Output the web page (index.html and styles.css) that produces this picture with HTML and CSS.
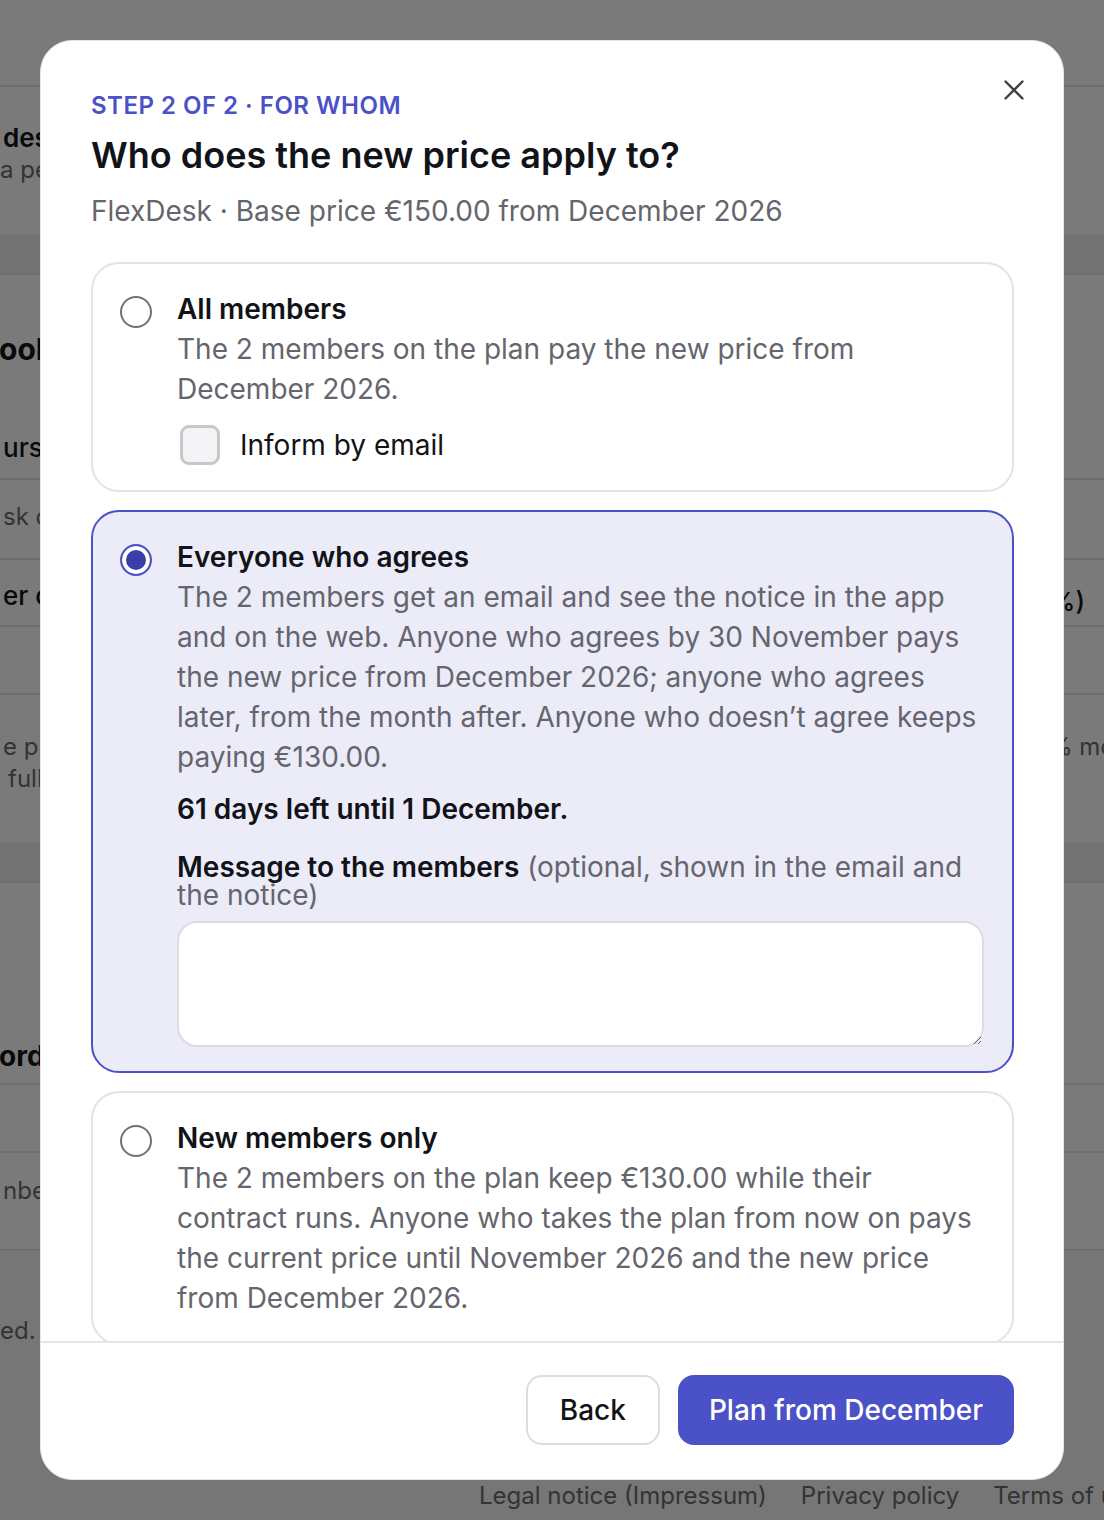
FILE: index.html
```html
<!DOCTYPE html>
<html lang="en">
<head>
<meta charset="utf-8">
<title>Who does the new price apply to?</title>
<link rel="stylesheet" href="styles.css">
</head>
<body>
<div class="page">
  <div class="page-main">
    <div class="bg-row bg-head"></div>
    <div class="bg-row bg-r1">
      <div class="bg-left">
        <div class="bg-strong">desk</div>
        <div class="bg-muted bg-pl0">a per month</div>
      </div>
    </div>
    <div class="bg-band"></div>
    <div class="bg-row bg-r2">
      <div class="bg-left">
        <div class="bg-h2">ook</div>
        <div class="bg-medium bg-hours">urs</div>
      </div>
    </div>
    <div class="bg-row bg-r3">
      <div class="bg-left"><div class="bg-muted">sk c</div></div>
    </div>
    <div class="bg-row bg-r4">
      <div class="bg-left"><div class="bg-medium">er c</div></div>
      <div class="bg-right bg-right-end"><span class="bg-medium">(−13%)</span></div>
    </div>
    <div class="bg-row bg-r5"></div>
    <div class="bg-row bg-r6">
      <div class="bg-left">
        <div class="bg-muted">e pr</div>
        <div class="bg-muted bg-pl8">full</div>
      </div>
      <div class="bg-right bg-right-start"><span class="bg-muted">10% more</span></div>
    </div>
    <div class="bg-band"></div>
    <div class="bg-row bg-r7">
      <div class="bg-left"><div class="bg-h3">orde</div></div>
    </div>
    <div class="bg-row bg-r8"></div>
    <div class="bg-row bg-r9">
      <div class="bg-left"><div class="bg-muted">nber</div></div>
    </div>
  </div>
  <footer class="page-footer">
    <div class="bg-muted bg-ended">ed.</div>
    <nav class="footer-links">
      <span>Legal notice (Impressum)</span>
      <span>Privacy policy</span>
      <span>Terms of use</span>
    </nav>
  </footer>
</div>

<div class="overlay">
  <div class="modal" role="dialog" aria-modal="true">
    <button class="close" aria-label="Close">
      <svg viewBox="0 0 20 20" width="20" height="20"><path d="M1.5 1.5 L18.5 18.5 M18.5 1.5 L1.5 18.5" fill="none" stroke="#3f3f46" stroke-width="2.4" stroke-linecap="round"/></svg>
    </button>
    <div class="modal-body">
      <div class="eyebrow">STEP 2 OF 2 · FOR WHOM</div>
      <h1 class="title">Who does the new price apply to?</h1>
      <p class="subtitle">FlexDesk · Base price €150.00 from December 2026</p>

      <div class="options">
        <label class="option">
          <span class="radio"></span>
          <span class="option-content">
            <span class="option-title">All members</span>
            <span class="option-desc">The 2 members on the plan pay the new price from December 2026.</span>
            <span class="check-row">
              <span class="checkbox"></span>
              <span class="check-label">Inform by email</span>
            </span>
          </span>
        </label>

        <div class="option option-selected">
          <span class="radio radio-on"></span>
          <div class="option-content">
            <span class="option-title">Everyone who agrees</span>
            <span class="option-desc">The 2 members get an email and see the notice in the app and on the web. Anyone who agrees by 30 November pays the new price from December 2026; anyone who agrees later, from the month after. Anyone who doesn’t agree keeps paying €130.00.</span>
            <span class="deadline">61 days left until 1 December.</span>
            <span class="msg-label"><strong>Message to the members</strong> (optional, shown in the email and the notice)</span>
            <textarea class="msg-input"></textarea>
          </div>
        </div>

        <label class="option">
          <span class="radio"></span>
          <span class="option-content">
            <span class="option-title">New members only</span>
            <span class="option-desc">The 2 members on the plan keep €130.00 while their contract runs. Anyone who takes the plan from now on pays the current price until November 2026 and the new price from December 2026.</span>
          </span>
        </label>
      </div>
    </div>
    <div class="modal-footer">
      <button class="btn btn-secondary">Back</button>
      <button class="btn btn-primary">Plan from December</button>
    </div>
  </div>
</div>
</body>
</html>
```

FILE: styles.css
```css
* { box-sizing: border-box; }
html, body { margin: 0; padding: 0; }
body {
  font-family: Inter, "Noto Sans", "Liberation Sans", sans-serif;
  color: #111318;
  background: #ffffff;
  width: 1104px;
  height: 1520px;
  overflow: hidden;
}

/* ---------- background page ---------- */
.page {
  display: flex;
  flex-direction: column;
  height: 1520px;
  overflow: hidden;
}
.page-main { display: flex; flex-direction: column; }
.bg-row {
  display: flex;
  justify-content: space-between;
  border-bottom: 2px solid #e6e6ea;
}
.bg-head { height: 87px; }
.bg-r1 { height: 148px; padding-top: 35px; border-bottom: none; }
.bg-band { height: 40px; background: #f1f1f3; border-bottom: 2px solid #e6e6ea; }
.bg-r2 { height: 205px; padding-top: 54px; }
.bg-r3 { height: 80px; padding-top: 21px; }
.bg-r4 { height: 67px; padding-top: 18px; }
.bg-r5 { height: 68px; }
.bg-r6 { height: 148px; padding-top: 36px; border-bottom: none; }
.bg-r7 { height: 202px; padding-top: 155px; }
.bg-r8 { height: 68px; }
.bg-r9 { height: 98px; padding-top: 22px; }
.bg-left { display: flex; flex-direction: column; padding-left: 3px; }
.bg-right { width: 110px; display: flex; align-items: center; }
.bg-right-end { justify-content: flex-end; padding-right: 19px; }
.bg-right-start { justify-content: flex-start; align-items: flex-start; width: 80px; overflow: hidden; white-space: nowrap; }
.bg-strong { font-size: 26px; font-weight: 600; line-height: 32px; }
.bg-medium { font-size: 26px; font-weight: 500; line-height: 36px; }
.bg-muted { font-size: 24px; color: #6b6b72; line-height: 32px; }
.bg-pl0 { margin-left: -3px; }
.bg-pl8 { padding-left: 5px; }
.bg-h2 { font-size: 30px; font-weight: 700; line-height: 40px; margin-left: -4px; }
.bg-hours { margin-top: 61px; }
.bg-h3 { font-size: 28px; font-weight: 700; line-height: 36px; margin-left: -4px; }
.page-footer {
  flex: 1;
  background: #f6f6f7;
  display: flex;
  flex-direction: column;
  padding-top: 64px;
}
.footer-links {
  display: flex;
  gap: 34px;
  padding-left: 479px;
  margin-top: 134px;
  font-size: 24px;
  color: #6b6b72;
  white-space: nowrap;
}

/* ---------- overlay + modal ---------- */
.overlay {
  position: fixed;
  inset: 0;
  background: rgba(0, 0, 0, 0.52);
  display: flex;
  align-items: center;
  justify-content: center;
}
.modal {
  position: relative;
  width: 1024px;
  height: 1440px;
  background: #ffffff;
  border: 1px solid #e4e4e9;
  border-radius: 32px;
  display: flex;
  flex-direction: column;
  overflow: hidden;
}
.close {
  position: absolute;
  top: 39px;
  right: 39px;
  width: 20px;
  height: 20px;
  padding: 0;
  border: none;
  background: none;
  display: flex;
}
.modal-body {
  flex: 1;
  min-height: 0;
  overflow: hidden;
  padding: 49px 49px 0 50px;
}
.eyebrow {
  font-size: 24px;
  line-height: 32px;
  font-weight: 600;
  letter-spacing: 0.5px;
  color: #4b51c7;
}
.title {
  margin: 10px 0 0;
  font-size: 36px;
  line-height: 46px;
  font-weight: 600;
  color: #111318;
}
.subtitle {
  margin: 13px 0 0;
  font-size: 28px;
  line-height: 40px;
  color: #65656d;
}
.options {
  margin-top: 31px;
  display: flex;
  flex-direction: column;
  gap: 18px;
}
.option {
  display: flex;
  gap: 25px;
  border: 2px solid #e2e2e8;
  border-radius: 28px;
  padding: 25px 28px 25px 27px;
  background: #ffffff;
}
.option-selected {
  border-color: #4b51c7;
  background: #ececf8;
  padding-bottom: 24px;
}
.radio {
  flex: none;
  width: 32px;
  height: 32px;
  margin-top: 7px;
  border-radius: 50%;
  border: 2px solid #707076;
  background: #ffffff;
}
.radio-on {
  border: 2.5px solid #4b51c7;
  background: #3a3ea6;
  box-shadow: inset 0 0 0 4px #ffffff;
}
.option-content {
  display: flex;
  flex-direction: column;
  flex: 1;
  min-width: 0;
}
.option-title {
  font-size: 28px;
  line-height: 40px;
  font-weight: 600;
  color: #111318;
}
.option-desc {
  font-size: 28px;
  line-height: 40px;
  color: #65656d;
}
.check-row {
  display: flex;
  align-items: center;
  gap: 20px;
  margin-top: 16px;
  padding-left: 3px;
}
.checkbox {
  width: 40px;
  height: 40px;
  border: 3px solid #c6c6cb;
  border-radius: 9px;
  background: #f4f4f6;
}
.check-label {
  font-size: 28px;
  line-height: 40px;
  color: #111318;
}
.deadline {
  margin-top: 12px;
  font-size: 28px;
  line-height: 40px;
  font-weight: 600;
  color: #111318;
}
.msg-label {
  margin-top: 24px;
  font-size: 28px;
  line-height: 28px;
  color: #65656d;
}
.msg-label strong { font-weight: 600; color: #111318; }
.msg-input {
  margin-top: 12px;
  width: 100%;
  height: 126px;
  border: 2px solid #dcdce2;
  border-radius: 20px;
  background: #ffffff;
  font: inherit;
  resize: vertical;
}
.modal-footer {
  flex: none;
  border-top: 2px solid #e4e4e9;
  padding: 32px 49px 34px;
  display: flex;
  justify-content: flex-end;
  gap: 18px;
}
.btn {
  height: 70px;
  border-radius: 16px;
  font-family: Inter, "Noto Sans", "Liberation Sans", sans-serif;
  font-size: 28px;
  font-weight: 500;
}
.btn-secondary {
  background: #ffffff;
  border: 2px solid #dcdce2;
  color: #111318;
  padding: 0 32px;
}
.btn-primary {
  background: #4b51c7;
  border: 2px solid #4b51c7;
  color: #ffffff;
  padding: 0 29px;
}
```
